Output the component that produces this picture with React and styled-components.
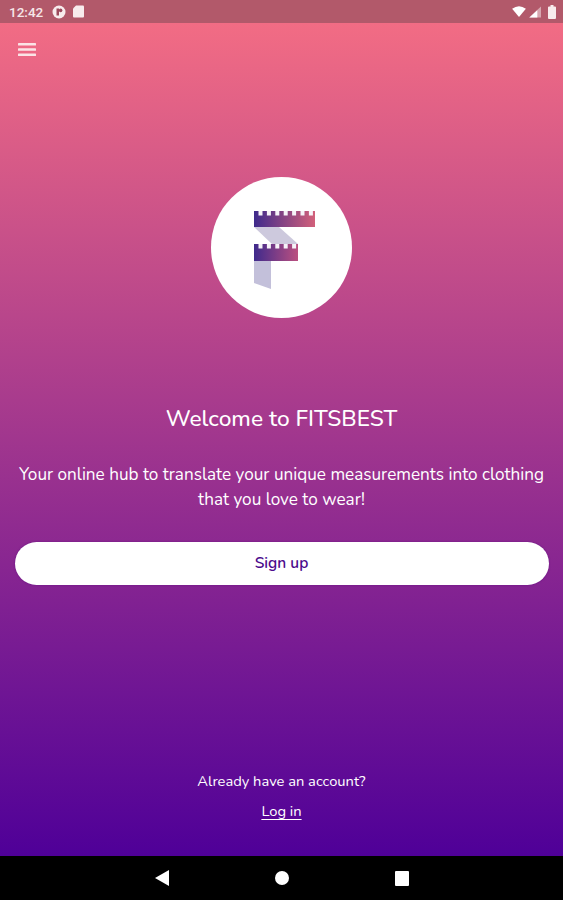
import React from 'react';
import styled, {createGlobalStyle} from 'styled-components';

const GlobalStyle = createGlobalStyle`
  html, body {
    margin: 0;
    padding: 0;
    background: #000;
  }
  * {
    box-sizing: border-box;
  }
`;

const Page = styled.div`
  width: 563px;
  height: 900px;
  display: flex;
  flex-direction: column;
  font-family: "Nunito", "Noto Sans", Lato, sans-serif;
  color: #fff;
  overflow: hidden;
`;

const StatusBar = styled.div`
  height: 23px;
  flex: none;
  background: #b2596a;
  display: flex;
  align-items: center;
  justify-content: space-between;
  padding: 0 7px 0 9px;
`;

const StatusGroup = styled.div`
  display: flex;
  align-items: center;
  gap: ${(props) => props.gap}px;
`;

const Clock = styled.span`
  font-family: Roboto, sans-serif;
  font-size: 13.5px;
  font-weight: 500;
  color: #f6e6e8;
  margin-right: 2px;
`;

const Screen = styled.div`
  flex: 1;
  display: flex;
  flex-direction: column;
  align-items: center;
  padding: 16px 15px 0;
  background: linear-gradient(180deg, #f26c84 0%, #4f0098 100%);
`;

const MenuButton = styled.button`
  align-self: flex-start;
  width: 24px;
  height: 20px;
  padding: 0;
  border: 0;
  background: none;
  color: #fbe3e6;
  display: flex;
  align-items: center;
  justify-content: center;
`;

const LogoCircle = styled.div`
  width: 141px;
  height: 141px;
  margin-top: 118px;
  border-radius: 50%;
  background: #fff;
  display: flex;
  align-items: center;
  justify-content: center;
`;

const Title = styled.h1`
  margin: 86px 0 0;
  font-size: 22.7px;
  line-height: 30px;
  font-weight: 500;
`;

const Description = styled.p`
  margin: 28px 0 0;
  font-size: 17.15px;
  line-height: 25px;
  text-align: center;
  white-space: nowrap;
`;

const SignUpButton = styled.button`
  width: 534px;
  height: 43px;
  margin-top: 30px;
  padding: 0 0 2px;
  border: 0;
  border-radius: 22px;
  background: #fff;
  color: #4b0a8c;
  font-family: inherit;
  font-size: 15.5px;
  font-weight: 600;
  box-shadow: 0 0 2px rgba(80, 0, 120, 0.6);
`;

const Footer = styled.div`
  margin-top: auto;
  padding-bottom: 35px;
  display: flex;
  flex-direction: column;
  align-items: center;
  gap: 10px;
  font-size: 14.7px;
  line-height: 20px;
`;

const LoginLink = styled.a`
  color: #fff;
  text-decoration: underline;
  text-underline-offset: 3px;
`;

const NavBar = styled.div`
  height: 44px;
  flex: none;
  background: #000;
  display: grid;
  grid-template-columns: repeat(3, 120px);
  justify-content: center;
  justify-items: center;
  align-items: center;
`;

function LogoMark() {
  const ticks = (count) => Array.from({length: count}, (_, i) => (
    <rect key={i} x={i * 8.4} y="0" width="4" height="4.5" fill="#f6f3f8" />
  ));
  return (
    <svg width="141" height="141" viewBox="211 177 141 141" style={{display: 'block'}}>
      <defs>
        <linearGradient id="rule" x1="0" y1="0" x2="1" y2="0">
          <stop offset="0" stopColor="#3f2a8c" />
          <stop offset="1" stopColor="#d2607a" />
        </linearGradient>
        <linearGradient id="ruleShort" x1="0" y1="0" x2="1" y2="0">
          <stop offset="0" stopColor="#3f2a8c" />
          <stop offset="1" stopColor="#bb5080" />
        </linearGradient>
      </defs>
      <polygon points="254,227 279,227 298,244 272,244" fill="#cdc9dd" />
      <polygon points="254,261 271,261 271,289 254,283" fill="#c3c0da" />
      <rect x="254" y="211" width="61" height="16" fill="url(#rule)" />
      <rect x="254" y="244" width="44" height="17" fill="url(#ruleShort)" />
      <g transform="translate(258.5 211)">{ticks(7)}</g>
      <g transform="translate(258.5 244)">{ticks(5)}</g>
    </svg>
  );
}

export default function App() {
  return (
    <Page>
      <GlobalStyle />
      <StatusBar>
        <StatusGroup gap={7}>
          <Clock>12:42</Clock>
          <svg width="14" height="14" viewBox="0 0 14 14">
            <circle cx="7" cy="7" r="6.5" fill="#f8eced" />
            <rect x="4.5" y="3.5" width="2.5" height="7" fill="#9c4a5c" />
            <circle cx="8.6" cy="5.4" r="1.8" fill="#9c4a5c" />
          </svg>
          <svg width="11" height="13" viewBox="0 0 11 13">
            <path d="M3 0.5 H10 a1 1 0 0 1 1 1 V11.5 a1 1 0 0 1 -1 1 H1 a1 1 0 0 1 -1 -1 V3.5 Z" fill="#f8eced" />
          </svg>
        </StatusGroup>
        <StatusGroup gap={3}>
          <svg width="14" height="11" viewBox="0 0 15 12">
            <path d="M0 3 Q7.5 -2.5 15 3 L7.5 12 Z" fill="#fff" />
          </svg>
          <svg width="12" height="12" viewBox="0 0 13 12">
            <path d="M13 0 V12 H0 Z" fill="#f0dadd" fillOpacity="0.6" />
            <path d="M9 4 V12 H0.5 L9 4 Z" fill="#fff" />
          </svg>
          <svg width="8" height="14" viewBox="0 0 8 14" style={{marginLeft: 4}}>
            <path d="M2.5 0 H5.5 V1.5 H7 a1 1 0 0 1 1 1 V13 a1 1 0 0 1 -1 1 H1 a1 1 0 0 1 -1 -1 V2.5 a1 1 0 0 1 1 -1 H2.5 Z" fill="#f8eced" />
          </svg>
        </StatusGroup>
      </StatusBar>
      <Screen>
        <MenuButton aria-label="menu">
          <svg width="18" height="13" viewBox="0 0 18 13" fill="currentColor">
            <rect y="0" width="18" height="2.6" rx="0.6" />
            <rect y="5.2" width="18" height="2.6" rx="0.6" />
            <rect y="10.4" width="18" height="2.6" rx="0.6" />
          </svg>
        </MenuButton>
        <LogoCircle>
          <LogoMark />
        </LogoCircle>
        <Title>Welcome to FITSBEST</Title>
        <Description>
          Your online hub to translate your unique measurements into clothing<br />
          that you love to wear!
        </Description>
        <SignUpButton>Sign up</SignUpButton>
        <Footer>
          <span>Already have an account?</span>
          <LoginLink>Log in</LoginLink>
        </Footer>
      </Screen>
      <NavBar>
        <svg width="14" height="16" viewBox="0 0 14 16">
          <path d="M14 0 V16 L0 8 Z" fill="#fff" />
        </svg>
        <svg width="14" height="14" viewBox="0 0 14 14">
          <circle cx="7" cy="7" r="7" fill="#fff" />
        </svg>
        <svg width="14" height="15" viewBox="0 0 14 15">
          <rect width="14" height="15" rx="1" fill="#fff" />
        </svg>
      </NavBar>
    </Page>
  );
}
